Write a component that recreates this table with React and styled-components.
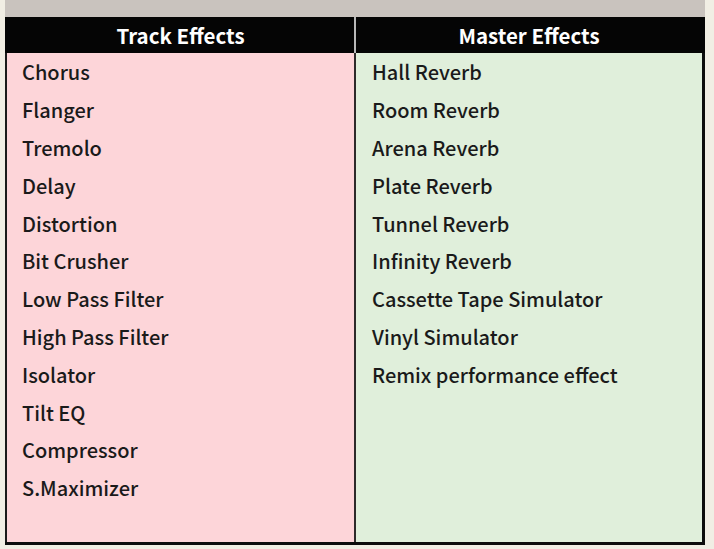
import styled, { createGlobalStyle } from "styled-components";

const GlobalStyle = createGlobalStyle`
  html, body {
    margin: 0;
    padding: 0;
    background: #f1eee4;
  }
  body {
    font-family: "Noto Sans CJK JP", "Noto Sans", sans-serif;
  }
`;

const TRACK_EFFECTS = [
  "Chorus",
  "Flanger",
  "Tremolo",
  "Delay",
  "Distortion",
  "Bit Crusher",
  "Low Pass Filter",
  "High Pass Filter",
  "Isolator",
  "Tilt EQ",
  "Compressor",
  "S.Maximizer",
];

const MASTER_EFFECTS = [
  "Hall Reverb",
  "Room Reverb",
  "Arena Reverb",
  "Plate Reverb",
  "Tunnel Reverb",
  "Infinity Reverb",
  "Cassette Tape Simulator",
  "Vinyl Simulator",
  "Remix performance effect",
];

const Page = styled.div`
  width: 700px;
  padding: 0 5px 4px;
`;

const TopStrip = styled.div`
  height: 17px;
  background: #c9c3be;
`;

const Table = styled.div`
  display: grid;
  grid-template-columns: 349px 2px 1fr;
  grid-template-rows: 36px 489px;
  border-bottom: 3px solid #0d0d0d;
`;

const HeadCell = styled.div`
  background: #050505;
  color: #ffffff;
  font-weight: 700;
  font-size: 20.5px;
  display: flex;
  align-items: center;
  justify-content: center;
  padding-bottom: 1px;
  ${(p) => (p.$first ? "padding-left: 2px;" : "padding-right: 3px;")}
`;

const HeadDivider = styled.div`
  background: #050505;
  display: flex;
  justify-content: center;

  &::after {
    content: "";
    width: 2px;
    background: #b8b8b8;
  }
`;

const Column = styled.div`
  background: ${(p) => p.$bg};
  ${(p) => (p.$first ? "border-left: 2px solid #1a1a1a;" : "border-right: 3px solid #0d0d0d;")}
  padding: 0 0 0 ${(p) => (p.$first ? "15px" : "16px")};
`;

const BodyDivider = styled.div`
  background: #2e2a2a;
`;

const Item = styled.div`
  height: 37.8px;
  display: flex;
  align-items: center;
  font-size: 20px;
  font-weight: 500;
  color: #1a1a1a;
`;

export default function App() {
  return (
    <>
      <GlobalStyle />
      <Page>
        <TopStrip />
        <Table>
          <HeadCell $first>Track Effects</HeadCell>
          <HeadDivider />
          <HeadCell>Master Effects</HeadCell>
          <Column $first $bg="#fdd5d9">
            {TRACK_EFFECTS.map((name) => (
              <Item key={name}>{name}</Item>
            ))}
          </Column>
          <BodyDivider />
          <Column $bg="#e0efdb">
            {MASTER_EFFECTS.map((name) => (
              <Item key={name}>{name}</Item>
            ))}
          </Column>
        </Table>
      </Page>
    </>
  );
}
